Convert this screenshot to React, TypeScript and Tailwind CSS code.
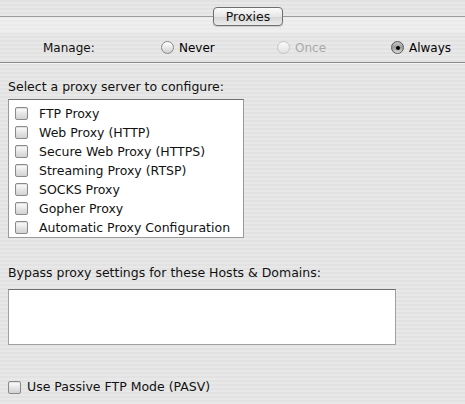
const proxies = [
  'FTP Proxy',
  'Web Proxy (HTTP)',
  'Secure Web Proxy (HTTPS)',
  'Streaming Proxy (RTSP)',
  'SOCKS Proxy',
  'Gopher Proxy',
  'Automatic Proxy Configuration',
];

function Checkbox() {
  return (
    <span className="inline-block h-[13px] w-[13px] shrink-0 rounded-[2px] border border-[#8a8a8a] bg-[linear-gradient(#ffffff,#e4e4e4_55%,#d2d2d2)] shadow-[inset_0_1px_1px_rgba(0,0,0,0.12)]" />
  );
}

function Radio({ checked, disabled, label }: { checked?: boolean; disabled?: boolean; label: string }) {
  return (
    <div className={`flex items-center gap-[5px] ${disabled ? 'text-[#a8a8a8]' : 'text-black'}`}>
      <span
        className={`flex h-[13px] w-[13px] shrink-0 items-center justify-center rounded-full border ${
          disabled
            ? 'border-[#c4c4c4] bg-[linear-gradient(#fafafa,#e2e2e2)]'
            : checked
              ? 'border-[#5a5a5a] bg-[linear-gradient(#c8c8c8,#9a9a9a_50%,#e0e0e0)]'
              : 'border-[#8a8a8a] bg-[linear-gradient(#ffffff,#e6e6e6_55%,#cfcfcf)]'
        }`}
      >
        {checked && <span className="h-[4px] w-[4px] rounded-full bg-black" />}
      </span>
      <span>{label}</span>
    </div>
  );
}

export default function App() {
  return (
    <div className="h-[404px] w-[465px] overflow-hidden bg-[repeating-linear-gradient(#e2e2e2_0px,#e2e2e2_2px,#e8e8e8_2px,#e8e8e8_4px)] font-['DejaVu_Sans',sans-serif] text-[12.5px] leading-[16px] text-[#111]">
      <div className="flex h-[33px] items-start bg-[linear-gradient(transparent_17px,rgba(255,255,255,0.3)_17px)]">
        <div className="mt-[16px] h-px w-[213px] bg-[#9c9c9c]" />
        <div className="mt-[7px] flex h-[19px] w-[70px] items-center justify-center rounded-[4px] border border-[#6e6e6e] bg-[linear-gradient(#fbfbfb,#e6e6e6_50%,#d4d4d4_51%,#ececec)] text-[12.5px] shadow-[0_1px_1px_rgba(0,0,0,0.15)]">
          Proxies
        </div>
        <div className="mt-[16px] h-px flex-1 bg-[#9c9c9c]" />
      </div>

      <div className="flex h-[29px] items-center pl-[43px] text-[12px]">
        <div className="w-[118px]">Manage:</div>
        <div className="w-[116px]">
          <Radio label="Never" />
        </div>
        <div className="w-[114px]">
          <Radio label="Once" disabled />
        </div>
        <Radio label="Always" checked />
      </div>
      <div className="h-px bg-[#8a8a8a]" />
      <div className="h-px bg-[#f4f4f4]" />

      <div className="px-[8px]">
        <div className="mt-[15px]">Select a proxy server to configure:</div>
        <div className="mt-[4px] h-[139px] w-[236px] border border-[#9a9a9a] border-t-[#6f6f6f] bg-white pt-[4px]">
          {proxies.map((name) => (
            <div key={name} className="flex h-[19px] items-center gap-[11px] pl-[6px]">
              <Checkbox />
              <span>{name}</span>
            </div>
          ))}
        </div>

        <div className="mt-[27px]">Bypass proxy settings for these Hosts &amp; Domains:</div>
        <div className="mt-[8px] h-[56px] w-[388px] border border-[#a0a0a0] border-t-[#6f6f6f] bg-white" />

        <div className="mt-[34px] flex items-center gap-[6px]">
          <Checkbox />
          <span>Use Passive FTP Mode (PASV)</span>
        </div>
      </div>
    </div>
  );
}
